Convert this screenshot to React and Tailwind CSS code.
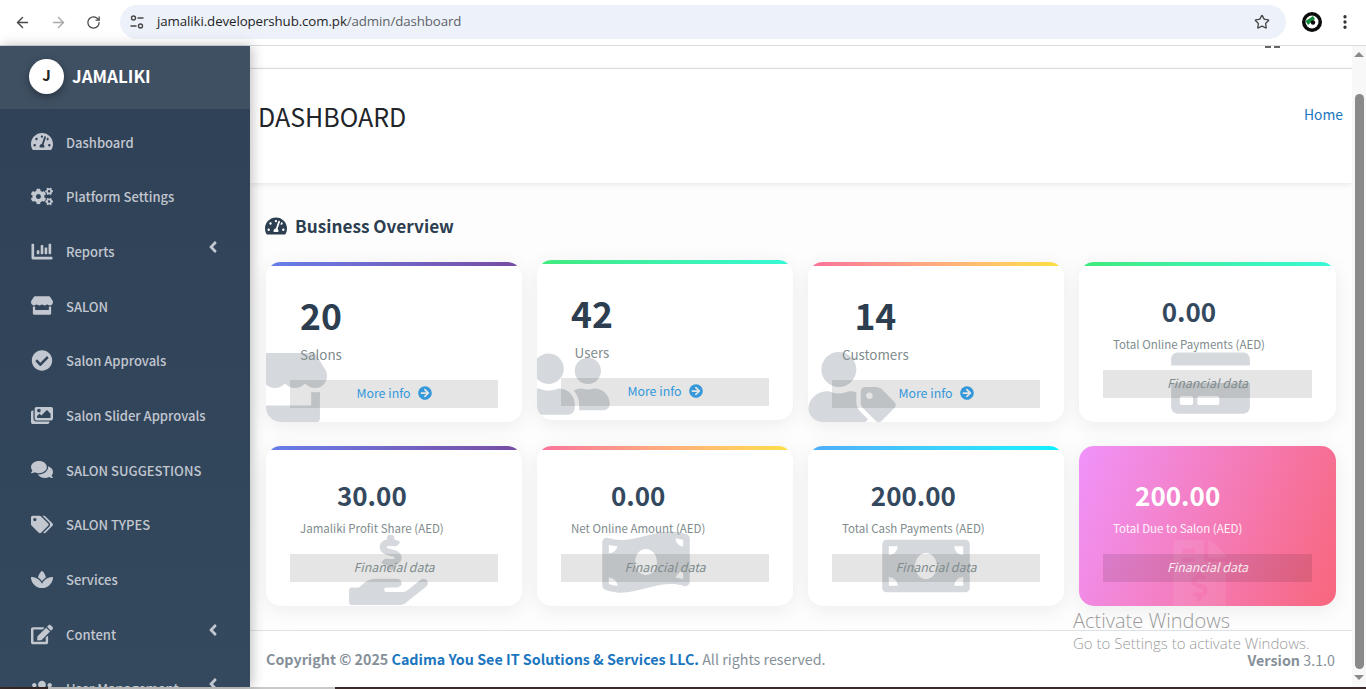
import { ArrowLeft, ArrowRight, RotateCw, Star, EllipsisVertical } from "lucide-react";
import {
  FaTachometerAlt,
  FaCogs,
  FaChartBar,
  FaStore,
  FaCheckCircle,
  FaImages,
  FaComments,
  FaTags,
  FaSpa,
  FaEdit,
  FaUsers,
  FaAngleLeft,
  FaArrowCircleRight,
  FaUserFriends,
  FaUserTag,
  FaCreditCard,
  FaHandHoldingUsd,
  FaMoneyBillWave,
  FaMoneyBill,
  FaFileInvoiceDollar,
} from "react-icons/fa";

const menu = [
  { icon: FaTachometerAlt, label: "Dashboard" },
  { icon: FaCogs, label: "Platform Settings" },
  { icon: FaChartBar, label: "Reports", arrow: true },
  { icon: FaStore, label: "SALON" },
  { icon: FaCheckCircle, label: "Salon Approvals" },
  { icon: FaImages, label: "Salon Slider Approvals" },
  { icon: FaComments, label: "SALON SUGGESTIONS" },
  { icon: FaTags, label: "SALON TYPES" },
  { icon: FaSpa, label: "Services" },
  { icon: FaEdit, label: "Content", arrow: true },
  { icon: FaUsers, label: "User Management", arrow: true },
];

const cards = [
  {
    value: "20",
    label: "Salons",
    bar: "from-[#667eea] to-[#764ba2]",
    icon: FaStore,
    iconClass: "left-[-23px] top-[91px] w-[84px] h-[70px]",
    link: true,
  },
  {
    value: "42",
    label: "Users",
    bar: "from-[#43e97b] to-[#38f9d7]",
    icon: FaUserFriends,
    iconClass: "left-[-15px] top-[89px] w-[88px] h-[70px]",
    link: true,
    lifted: true,
  },
  {
    value: "14",
    label: "Customers",
    bar: "from-[#fa709a] to-[#fee140]",
    icon: FaUserTag,
    iconClass: "left-0 top-[90px] w-[88px] h-[70px]",
    link: true,
  },
  {
    value: "0.00",
    label: "Total Online Payments (AED)",
    bar: "from-[#43e97b] to-[#38f9d7]",
    icon: FaCreditCard,
    iconClass: "left-[92px] top-[86px] w-[79px] h-[70px]",
  },
  {
    value: "30.00",
    label: "Jamaliki Profit Share (AED)",
    bar: "from-[#667eea] to-[#764ba2]",
    icon: FaHandHoldingUsd,
    iconClass: "left-[83px] top-[89px] w-[79px] h-[70px]",
  },
  {
    value: "0.00",
    label: "Net Online Amount (AED)",
    bar: "from-[#fa709a] to-[#fee140]",
    icon: FaMoneyBillWave,
    iconClass: "left-[65px] top-[81px] w-[88px] h-[70px]",
  },
  {
    value: "200.00",
    label: "Total Cash Payments (AED)",
    bar: "from-[#4facfe] to-[#00f2fe]",
    icon: FaMoneyBill,
    iconClass: "left-[74px] top-[85px] w-[88px] h-[70px]",
  },
  {
    value: "200.00",
    label: "Total Due to Salon (AED)",
    icon: FaFileInvoiceDollar,
    iconClass: "left-[94px] top-[94px] w-[53px] h-[70px]",
    pink: true,
  },
];

function StatCard({ card }) {
  const Icon = card.icon;
  return (
    <div
      className={`relative h-40 overflow-hidden rounded-[15px] shadow-[0_4px_20px_rgba(0,0,0,0.07)] ${
        card.pink ? "bg-[linear-gradient(110deg,#f093fb,#f8667c)]" : "bg-white"
      } ${card.lifted ? "-translate-y-0.5" : ""}`}
    >
      {!card.pink && <div className={`absolute inset-x-0 top-0 h-1 bg-gradient-to-r ${card.bar}`} />}
      <Icon
        className={`absolute ${card.iconClass} ${card.pink ? "text-white/[0.08]" : "text-[#2c3e50]/20"}`}
      />
      <div className="relative flex h-full flex-col px-6">
        <div
          className={`ml-[10px] flex w-fit flex-col items-center ${card.link ? "pt-[29px]" : "pt-[31px]"}`}
        >
          <div
            className={
              card.link
                ? "text-[35.5px] leading-[48px] font-bold text-[#2c3e50]"
                : `text-[26px] leading-9 font-bold ${card.pink ? "text-white" : "text-[#34495e]"}`
            }
          >
            {card.value}
          </div>
          <div
            className={
              card.link
                ? "mt-[5px] text-[13.4px] leading-5 text-[#7f8c8d]"
                : `mt-[6px] text-[11.5px] leading-[18px] ${card.pink ? "text-white/90" : "text-[#7f8c8d]"}`
            }
          >
            {card.label}
          </div>
        </div>
        <div
          className={`flex h-7 items-center justify-center gap-[7px] bg-black/10 pb-[2px] text-[12.4px] ${
            card.link ? "mt-[16px] text-[#3498db]" : "mt-[17px]"
          }`}
        >
          {card.link ? (
            <>
              More info <FaArrowCircleRight className="size-[14px]" />
            </>
          ) : (
            <span className={`italic ${card.pink ? "text-white/85" : "text-[#7f8c8d]"}`}>Financial data</span>
          )}
        </div>
      </div>
    </div>
  );
}

function Browser() {
  return (
    <div className="flex h-[46px] shrink-0 items-center border-b border-[#dadce0] bg-white pb-[1px] font-['Open_Sans','Liberation_Sans',sans-serif]">
      <ArrowLeft className="ml-[14px] size-[17px] text-[#474747]" strokeWidth={2} />
      <ArrowRight className="ml-[19px] size-[17px] text-[#a8a8a8]" strokeWidth={2} />
      <RotateCw className="ml-[19px] size-[15px] text-[#474747]" strokeWidth={2} />
      <div className="ml-[19px] flex h-[34px] w-[1166px] items-center rounded-full bg-[#edf2fa] pr-[16px]">
        <svg viewBox="0 0 16 16" className="ml-[9px] size-4 text-[#474747]" fill="none" stroke="currentColor" strokeWidth="1.4">
          <circle cx="4.5" cy="4" r="2" />
          <path d="M8.5 4h6M1.5 12h6" />
          <circle cx="11.5" cy="12" r="2" />
        </svg>
        <span className="ml-[12px] text-[13.3px] tracking-[-0.1px] text-[#1f1f1f]">
          jamaliki.developershub.com.pk<span className="text-[#5f6368]">/admin/dashboard</span>
        </span>
        <Star className="ml-auto size-4 text-[#474747]" strokeWidth={2} />
      </div>
      <svg viewBox="0 0 20 20" className="ml-[16px] size-5">
        <circle cx="10" cy="10" r="10" fill="#0b0b0b" />
        <circle cx="10" cy="10" r="6.5" fill="#fff" />
        <path d="M3.5 9 L11 4 L13 7 L6 13 Z" fill="#178a3e" />
        <circle cx="11" cy="10.5" r="2.2" fill="#0b0b0b" />
      </svg>
      <EllipsisVertical className="ml-[14px] size-[18px] text-[#303030]" strokeWidth={2.4} />
    </div>
  );
}

function Sidebar() {
  return (
    <aside className="z-10 flex h-full w-[250px] shrink-0 flex-col overflow-hidden bg-gradient-to-b from-[#2f4156] to-[#34495e] shadow-[2px_0_12px_rgba(0,0,0,0.25)]">
      <div className="flex h-[63px] shrink-0 items-center bg-[#3f5063] pb-[2px] pl-[29px]">
        <div className="flex size-[35px] items-center justify-center rounded-full bg-white pb-[3px] text-[15px] font-bold text-[#222] shadow-[0_3px_8px_rgba(0,0,0,0.35)]">
          J
        </div>
        <span className="ml-2 pb-[2px] text-[17px] font-bold text-white">JAMALIKI</span>
      </div>
      <nav className="mt-[7px]">
        {menu.map(({ icon: Icon, label, arrow }) => (
          <div key={label} className="flex h-[54.7px] shrink-0 items-center pl-[31px] text-[#c2c7d0]">
            <Icon className="mb-[3px] h-[21px] w-[22px] shrink-0" />
            <span className="ml-[13px] pb-[2px] text-[13px] font-medium">{label}</span>
            {arrow && <FaAngleLeft className="mb-[12px] ml-auto mr-[28px] size-[18px]" />}
          </div>
        ))}
      </nav>
    </aside>
  );
}

function Scrollbar() {
  return (
    <div className="flex w-[14px] shrink-0 flex-col items-center bg-[#f8f8f8]">
      <div className="mt-[6px] size-0 border-x-[5px] border-b-[5px] border-x-transparent border-b-[#8a8a8a]" />
      <div className="mt-[37px] h-[575px] w-[9px] rounded-full bg-[#8a8a8a]" />
      <div className="mt-[6px] size-0 border-x-[5px] border-t-[5px] border-x-transparent border-t-[#8a8a8a]" />
    </div>
  );
}

export default function App() {
  return (
    <div className="relative flex h-[689px] w-[1366px] flex-col overflow-hidden bg-white font-['Noto_Sans_CJK_SC','Liberation_Sans',sans-serif]">
      <Browser />
      <div className="flex min-h-0 flex-1">
        <Sidebar />
        <main className="flex min-w-0 flex-1 flex-col bg-[#fdfdfd]">
          <div className="flex h-[23px] shrink-0 justify-end gap-[3px] border-b border-[#dee2e6] bg-white pr-[72px]">
            <div className="h-[2px] w-[6px] bg-[#666]" />
            <div className="h-[2px] w-[6px] bg-[#666]" />
          </div>
          <header className="flex h-[114px] shrink-0 items-start justify-between bg-white pl-2 pr-[9px] pt-[30px] shadow-[0_1px_6px_rgba(0,0,0,0.1)]">
            <h1 className="text-[25px] leading-[34px] text-[#212529]">DASHBOARD</h1>
            <a className="text-[13.9px] leading-[30px] text-[#1a76c0]">Home</a>
          </header>
          <section className="flex-1 px-4 pt-[31px]">
            <h2 className="flex items-center text-[17.2px] leading-6 font-semibold text-[#2c3e50]">
              <FaTachometerAlt className="-ml-px h-[20px] w-[22px] text-[#2c3e50]" />
              <span className="ml-2">Business Overview</span>
            </h2>
            <div className="mt-6 grid grid-cols-[256px_256px_256px_257px] gap-x-[15px] gap-y-6">
              {cards.map((c) => (
                <StatCard key={c.label} card={c} />
              ))}
            </div>
          </section>
          <footer className="flex h-[57px] shrink-0 items-center justify-between border-t border-[#dee2e6] bg-white pl-4 pr-[17px] text-[14.3px] text-[#869099]">
            <div>
              <b className="font-bold">Copyright © 2025 </b>
              <b className="font-bold text-[#1a76c0]">Cadima You See IT Solutions &amp; Services LLC.</b> All rights
              reserved.
            </div>
            <div className="pt-[1px]">
              <b className="font-bold">Version</b> 3.1.0
            </div>
          </footer>
        </main>
        <Scrollbar />
      </div>
      <div className="flex h-[2px] shrink-0">
        <div className="w-[48px] bg-[#3c2a2a]" />
        <div className="w-[287px] bg-[#c9c9c9]" />
        <div className="flex-1 bg-[#3c2a2a]" />
      </div>
      <div className="pointer-events-none absolute left-[1073px] top-[609px] font-['Open_Sans','Liberation_Sans',sans-serif] font-light text-[#9b9b9b]">
        <div className="text-[20px] leading-6">Activate Windows</div>
        <div className="text-[15px] leading-5">Go to Settings to activate Windows.</div>
      </div>
    </div>
  );
}
